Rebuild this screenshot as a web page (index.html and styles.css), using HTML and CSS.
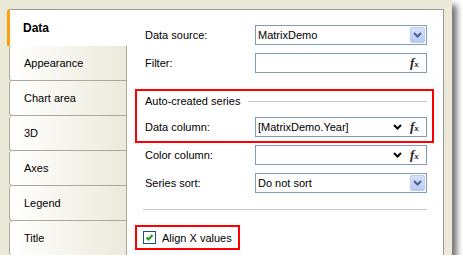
FILE: index.html
```html
<!DOCTYPE html>
<html lang="en">
<head>
    <meta charset="UTF-8">
    <title>Chart editor - Data</title>
    <link rel="stylesheet" href="styles.css">
</head>
<body>

<div class="window">
    <ul class="tabs">
        <li class="tab active">Data</li>
        <li class="tab">Appearance</li>
        <li class="tab">Chart area</li>
        <li class="tab">3D</li>
        <li class="tab">Axes</li>
        <li class="tab">Legend</li>
        <li class="tab last">Title</li>
    </ul>

    <div class="panel">
        <div class="row">
            <label>Data source:</label>
            <div class="field">
                <span class="value">MatrixDemo</span>
                <span class="drop-btn">
                    <svg width="9" height="6" viewBox="0 0 9 6"><polyline points="1,1 4.5,4.5 8,1" fill="none" stroke="#4d6185" stroke-width="2"/></svg>
                </span>
            </div>
        </div>

        <div class="row">
            <label>Filter:</label>
            <div class="field">
                <span class="value"></span>
                <span class="fx">f<small>x</small></span>
            </div>
        </div>

        <div class="highlight series-group">
            <div class="group-title">
                <span>Auto-created series</span>
                <span class="rule"></span>
            </div>
            <div class="row">
                <label>Data column:</label>
                <div class="field">
                    <span class="value">[MatrixDemo.Year]</span>
                    <svg class="chevron" width="9" height="6" viewBox="0 0 9 6"><polyline points="1,1 4.5,4.5 8,1" fill="none" stroke="#000" stroke-width="2"/></svg>
                    <span class="fx">f<small>x</small></span>
                </div>
            </div>
        </div>

        <div class="row color-row">
            <label>Color column:</label>
            <div class="field">
                <span class="value"></span>
                <svg class="chevron" width="9" height="6" viewBox="0 0 9 6"><polyline points="1,1 4.5,4.5 8,1" fill="none" stroke="#000" stroke-width="2"/></svg>
                <span class="fx">f<small>x</small></span>
            </div>
        </div>

        <div class="row">
            <label>Series sort:</label>
            <div class="field">
                <span class="value">Do not sort</span>
                <span class="drop-btn">
                    <svg width="9" height="6" viewBox="0 0 9 6"><polyline points="1,1 4.5,4.5 8,1" fill="none" stroke="#4d6185" stroke-width="2"/></svg>
                </span>
            </div>
        </div>

        <div class="separator"></div>

        <div class="highlight align-box">
            <span class="check">
                <svg width="11" height="11" viewBox="0 0 11 11"><polyline points="2.5,5.5 4.5,7.5 8.5,3" fill="none" stroke="#21a121" stroke-width="2.2"/></svg>
            </span>
            <span>Align X values</span>
        </div>
    </div>
</div>

</body>
</html>
```

FILE: styles.css
```css
body {
    margin: 0;
    background-color: #fff;
    font-family: "Liberation Sans", Arial, sans-serif;
    font-size: 11px;
    color: #000;
}

.window {
    width: 452px;
    height: 255px;
    box-sizing: border-box;
    padding: 9px 8px 0 7px;
    background-color: #ece9d8;
    display: flex;
    box-shadow: 5px 5px 6px rgba(0, 0, 0, 0.55);
}

/* left tab strip */
.tabs {
    list-style: none;
    margin: 0;
    padding: 0;
    width: 120px;
    display: flex;
    flex-direction: column;
}

.tab {
    height: 35px;
    box-sizing: border-box;
    margin-left: 2px;
    padding-left: 14px;
    display: flex;
    align-items: center;
    border: 1px solid #aca899;
    border-top: none;
    border-radius: 3px 0 0 3px;
    background: linear-gradient(to right, #ffffff, #eceadb);
}

.tab.active {
    height: 37px;
    margin-left: 0;
    padding-left: 13px;
    border: none;
    border-top: 1px solid #919b9c;
    border-left: 3px solid #f8a20f;
    border-radius: 3px 0 0 0;
    background: #fff;
    font-weight: bold;
    font-size: 12px;
}

.tab.last {
    flex: 1;
    border-bottom: none;
}

/* content panel */
.panel {
    flex: 1;
    background-color: #fff;
    border-top: 1px solid #919b9c;
    border-right: 1px solid #919b9c;
    padding: 15px 16px 0 18px;
    display: flex;
    flex-direction: column;
}

.row {
    display: flex;
    align-items: center;
    height: 20px;
    margin-bottom: 8px;
}

.row label {
    width: 110px;
}

.field {
    flex: 1;
    height: 20px;
    box-sizing: border-box;
    border: 1px solid #7f9db9;
    display: flex;
    align-items: center;
    padding-left: 2px;
}

.field .value {
    flex: 1;
}

.drop-btn {
    width: 15px;
    height: 16px;
    margin-right: 1px;
    box-sizing: border-box;
    border: 1px solid #b9c9ef;
    border-radius: 2px;
    background: linear-gradient(#d6e2fd, #b7cbf8);
    display: flex;
    align-items: center;
    justify-content: center;
}

.chevron {
    margin-right: 8px;
}

.fx {
    width: 14px;
    margin-right: 2px;
    font-family: "Liberation Serif", "Times New Roman", serif;
    font-style: italic;
    font-weight: bold;
    font-size: 13px;
    color: #222;
}

.fx small {
    font-size: 9px;
}

/* red highlight boxes */
.highlight {
    border: 2px solid #f00;
}

.series-group {
    margin: 8px -7px 0 -10px;
    padding: 0 5px 4px 8px;
}

.group-title {
    height: 20px;
    display: flex;
    align-items: center;
    margin-bottom: 6px;
}

.group-title .rule {
    flex: 1;
    height: 1px;
    margin-left: 8px;
    background-color: #c4c4c4;
}

.series-group .row {
    margin-bottom: 0;
}

.color-row {
    margin-top: 2px;
}

.separator {
    height: 1px;
    margin: 8px 0 0 -2px;
    background-color: #c4c4c4;
}

.align-box {
    align-self: flex-start;
    margin: 15px 0 0 -10px;
    height: 25px;
    box-sizing: border-box;
    padding: 0 6px;
    display: flex;
    align-items: center;
    gap: 6px;
}

.check {
    width: 13px;
    height: 13px;
    box-sizing: border-box;
    border: 1px solid #1c5180;
    background-color: #fff;
    display: flex;
    align-items: center;
    justify-content: center;
}
```
